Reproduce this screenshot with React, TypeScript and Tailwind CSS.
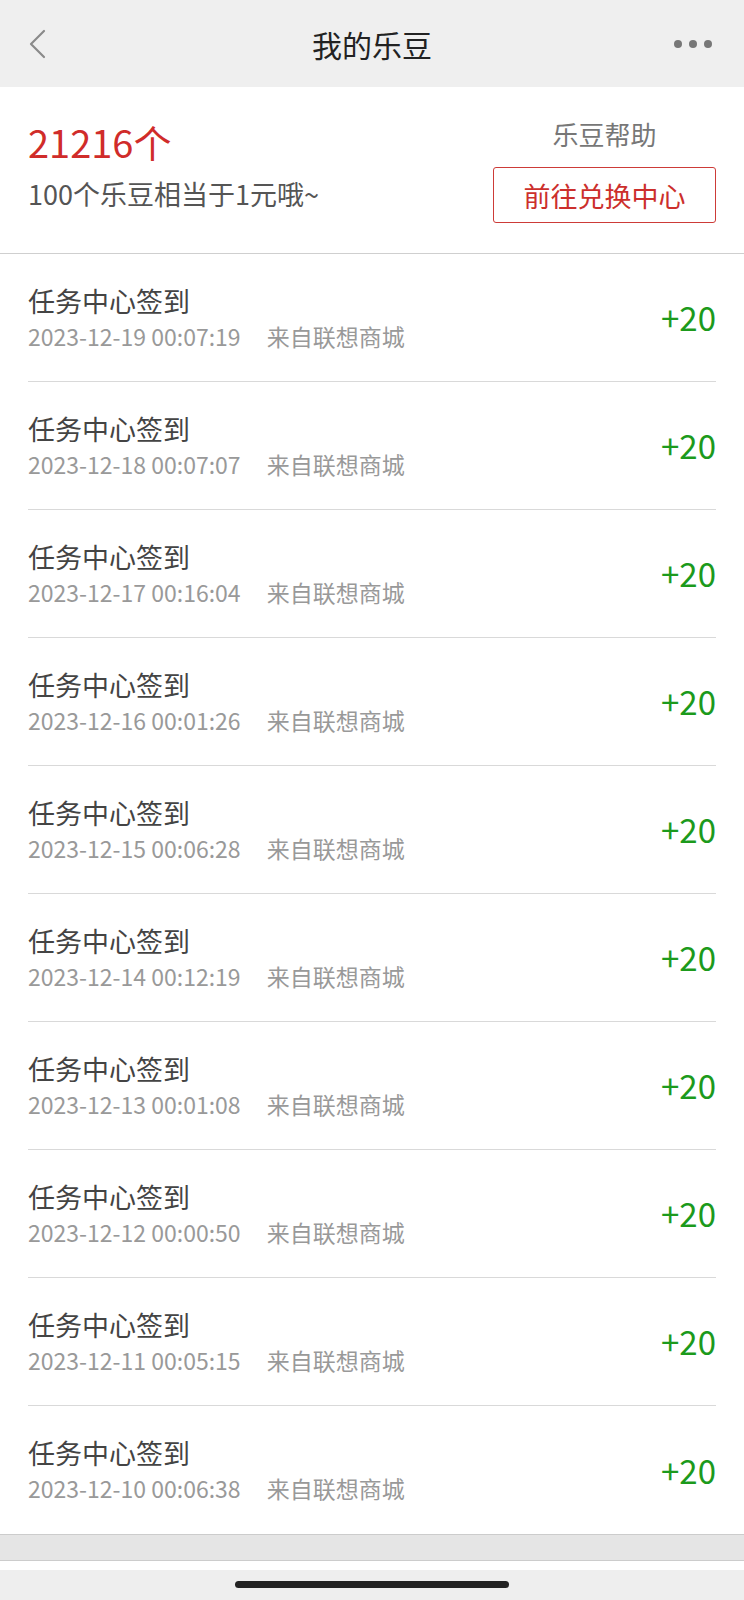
import React from 'react'

const records = [
  { time: '2023-12-19 00:07:19' },
  { time: '2023-12-18 00:07:07' },
  { time: '2023-12-17 00:16:04' },
  { time: '2023-12-16 00:01:26' },
  { time: '2023-12-15 00:06:28' },
  { time: '2023-12-14 00:12:19' },
  { time: '2023-12-13 00:01:08' },
  { time: '2023-12-12 00:00:50' },
  { time: '2023-12-11 00:05:15' },
  { time: '2023-12-10 00:06:38' },
]

const font = "font-['Noto_Sans_CJK_SC','Noto_Sans',sans-serif]"

const App = () => {
  return (
    <div className={`w-[744px] min-h-[1600px] bg-white ${font}`}>
      {/* top bar */}
      <div className='h-[87px] bg-[#efefef] grid grid-cols-[1fr_auto_1fr] items-center px-[28px]'>
        <svg width='18' height='30' viewBox='0 0 18 30' fill='none'>
          <path d='M16 2 L3 15 L16 28' stroke='#8a8a8a' strokeWidth='2.2' strokeLinecap='round' strokeLinejoin='round' />
        </svg>
        <div className='text-[30px] text-[#222] leading-none'>我的乐豆</div>
        <div className='flex gap-[7px] items-center justify-end mr-[4px]'>
          <span className='w-[8px] h-[8px] rounded-full bg-[#777]'></span>
          <span className='w-[8px] h-[8px] rounded-full bg-[#777]'></span>
          <span className='w-[8px] h-[8px] rounded-full bg-[#777]'></span>
        </div>
      </div>

      {/* summary */}
      <div className='h-[167px] border-b border-[#cfcfcf] flex justify-between px-[28px]'>
        <div className='pt-[31px]'>
          <div className='text-[38px] leading-[48px] text-[#d02c2a]'>21216个</div>
          <div className='text-[27px] leading-[34px] text-[#555] mt-[11px]'>100个乐豆相当于1元哦~</div>
        </div>
        <div className='flex flex-col items-center pt-[30px]'>
          <div className='text-[26px] leading-[34px] text-[#777]'>乐豆帮助</div>
          <button className='mt-[16px] w-[223px] h-[56px] border border-[#cd3b38] rounded-[3px] text-[27px] text-[#cc2f2c] leading-none'>前往兑换中心</button>
        </div>
      </div>

      {/* list */}
      <div className='px-[28px]'>
        {records.map((r, i) => (
          <div key={i} className={`h-[128px] flex items-center justify-between ${i < records.length - 1 ? 'border-b border-[#d9d9d9]' : ''}`}>
            <div className='-mt-[2px]'>
              <div className='text-[27px] leading-[38px] text-[#444]'>任务中心签到</div>
              <div className='text-[23px] leading-[32px] text-[#999] flex gap-[26px]'>
                <span>{r.time}</span>
                <span>来自联想商城</span>
              </div>
            </div>
            <div className='text-[33px] text-[#1c9a1c] leading-none'>+20</div>
          </div>
        ))}
      </div>

      {/* bottom */}
      <div className='h-[27px] bg-[#e5e5e5] border-y border-[#cccccc]'></div>
      <div className='h-[9px] bg-white'></div>
      <div className='h-[32px] bg-[#eeeeee] flex justify-center pt-[11px]'>
        <div className='w-[274px] h-[7px] rounded-full bg-[#222]'></div>
      </div>
    </div>
  )
}

export default App
